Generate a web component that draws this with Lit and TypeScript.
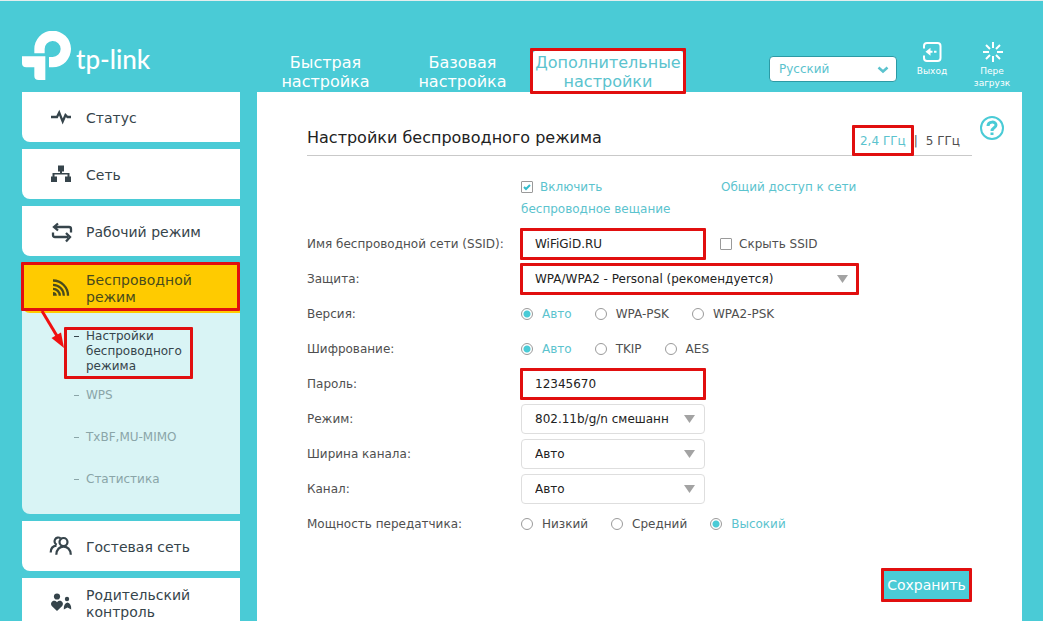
import { LitElement, html, css, svg, nothing } from "lit";
import { customElement, property, state } from "lit/decorators.js";
import { classMap } from "lit/directives/class-map.js";

const icons = {
  status: svg`<path d="M0 9H6L8.200 4.500L11.700 13.500L14.500 7L16.500 9H20" fill="none" stroke="currentColor" stroke-width="2.300"/>`,
  network: svg`<path d="M7 .5h6v6h-2v1.500h7.500v3.500h1.500v5.500h-6v-5.500h2.500v-2h-13v2h2.500v5.500h-6v-5.500h1.500v-3.500h7.500v-1.500h-2z" fill="currentColor"/>`,
  mode: svg`<path d="M2 10.500V13Q2 15 4 15H17M4 5H18Q20 5 20 7V10.500M7 1.500L3 5L7 8.500M15 11L19 15L15 19.500" fill="none" stroke="currentColor" stroke-width="2.300"/>`,
  wireless: svg`<g fill="none" stroke="currentColor" stroke-width="2.300"><path d="M2 1.500A15 15 0 0 1 17 16.700M2 5.800A10.800 10.800 0 0 1 12.800 16.700M2 9.900A6.800 6.800 0 0 1 8.800 16.700"/></g><path d="M2 12.900a3.800 3.800 0 0 1 3.800 3.800H2z" fill="currentColor"/>`,
  guest: svg`<g fill="none" stroke="currentColor" stroke-width="2.200"><circle cx="12.500" cy="5" r="4"/><path d="M9.500 1.200A3.800 3.800 0 1 0 5.800 7.800M-.3 15.500C-.3 11.500 1.500 9 5.500 8.600M5.300 17.800C5.300 6.800 19.800 6.800 19.800 17.800"/></g>`,
  parental: svg`<g fill="currentColor"><circle cx="6" cy="2.500" r="3.100"/><path d="M6 17L.8 12C-1.800 8.500 3 4.500 6 8.300C9 4.500 13.800 8.500 11.200 12z"/><circle cx="16" cy="5" r="2.200"/><path d="M12.800 15.500C12.500 11.500 14 9 16.500 8.500C19 9 20.500 11.500 20.200 15.500L16.500 13.500z"/></g>`,
};

type IconName = keyof typeof icons;

interface Section {
  icon: IconName;
  label: string;
  pages?: string[];
}

const SECTIONS: Section[] = [
  { icon: "status", label: "Статус" },
  { icon: "network", label: "Сеть" },
  { icon: "mode", label: "Рабочий режим" },
  {
    icon: "wireless",
    label: "Беспроводной режим",
    pages: ["Настройки беспроводного режима", "WPS", "TxBF,MU-MIMO", "Статистика"],
  },
  { icon: "guest", label: "Гостевая сеть" },
  { icon: "parental", label: "Родительский контроль" },
];

const shared = css`
  :host {
    display: block;
    font-family: "DejaVu Sans", Verdana, Tahoma, sans-serif;
    font-size: 12px;
  }
  *,
  *::before,
  *::after {
    box-sizing: border-box;
  }
  a {
    color: inherit;
    text-decoration: none;
  }
  button,
  input,
  select {
    margin: 0;
    font: inherit;
    color: inherit;
  }
  .mark {
    position: relative;
  }
  .mark::after {
    content: "";
    position: absolute;
    inset: var(--mark-inset, -2px);
    border: 3px solid #e10f0f;
    border-radius: 1px;
    pointer-events: none;
    z-index: 2;
  }
`;

@customElement("router-header")
class RouterHeader extends LitElement {
  static styles = [
    shared,
    css`
      .bar {
        display: grid;
        grid-template-columns: 218px 1fr;
        column-gap: 17px;
        height: 92px;
        padding: 0 21px 0 22px;
        color: #fff;
      }
      .logo {
        display: flex;
        padding-top: 31px;
      }
      .logo svg {
        width: 50px;
        height: 49px;
      }
      .word {
        margin: 9px 0 0 4px;
        font: 500 26px/38px Lato, sans-serif;
      }
      .right {
        display: flex;
        justify-content: space-between;
      }
      .tabs {
        display: flex;
        align-items: flex-end;
        font-size: 16px;
        line-height: 19px;
        text-align: center;
      }
      .tab {
        width: 137px;
        height: 42px;
        padding-top: 3px;
      }
      .tab.current {
        width: 152px;
        margin-left: 1px;
        background: #fff;
        color: #5bc3ce;
        border-radius: 6px 6px 0 0;
      }
      .tools {
        display: flex;
        align-items: flex-start;
      }
      .language {
        position: relative;
        margin-top: 56px;
        color: #5bc3ce;
      }
      .language select {
        display: block;
        width: 128px;
        height: 26px;
        padding: 0 24px 1px 9px;
        appearance: none;
        background: #fff;
        border: 1px solid #2c9aa5;
        border-radius: 4px;
      }
      .language svg {
        position: absolute;
        right: 8px;
        top: 10px;
        width: 12px;
        height: 8px;
        pointer-events: none;
      }
      .tool {
        width: 60px;
        margin-top: 41px;
        padding: 0;
        border: 0;
        background: none;
        font-size: 9px;
        line-height: 12px;
        text-align: center;
      }
      .tool svg {
        display: block;
        width: 22px;
        height: 22px;
        margin: 0 auto 2px;
      }
      .logout {
        margin-left: 5px;
      }
    `,
  ];

  render() {
    return html`
      <header class="bar">
        <a class="logo" href="#" aria-label="tp-link">
          <svg viewBox="66 93 150 147" fill="#fff" aria-hidden="true">
            <path d="M103 160V149A55 55 0 1 1 158 202H147V171H158A24 24 0 1 0 134 148V160Z" />
            <path d="M66 169H136V240H116Q103 240 103 228V202H79Q66 202 66 190Z" />
          </svg>
          <span class="word">tp-link</span>
        </a>
        <div class="right">
          <nav class="tabs">
            <a class="tab" href="#quick">Быстрая<br />настройка</a>
            <a class="tab" href="#basic">Базовая<br />настройка</a>
            <a class="tab current mark" href="#advanced">Дополнительные<br />настройки</a>
          </nav>
          <div class="tools">
            <div class="language">
              <select aria-label="Язык">
                <option>Русский</option>
              </select>
              <svg viewBox="0 0 12 8" fill="none" stroke="currentColor" stroke-width="2.500" aria-hidden="true">
                <path d="M1.500 1.500L6 5.500L10.500 1.500" />
              </svg>
            </div>
            <button class="tool logout">
              <svg viewBox="0 0 22 22" fill="none" stroke="#fff" stroke-width="2" aria-hidden="true">
                <path d="M3 7.500V5Q3 2 6 2H16.500Q19.500 2 19.500 5V17Q19.500 20 16.500 20H6Q3 20 3 17V14.500" />
                <path d="M8 10.800H11.500M13 10.800H15.500" />
                <path d="M4.500 10.800L9.500 6.800V14.800Z" fill="#fff" stroke="none" />
              </svg>
              Выход
            </button>
            <button class="tool">
              <svg viewBox="0 0 22 22" stroke="#fff" stroke-width="2" aria-hidden="true">
                <path d="M12 1V7M12 15V21M2 11H8M16 11H22M5 4L9 8M15 14L19 18M19 4L15 8M9 14L5 18" />
              </svg>
              Пере<br />загрузк
            </button>
          </div>
        </div>
      </header>
    `;
  }
}

@customElement("router-menu")
class RouterMenu extends LitElement {
  static styles = [
    shared,
    css`
      .menu {
        display: flex;
        flex-direction: column;
        gap: 7px;
      }
      .section {
        background: #fff;
        border-bottom-left-radius: 8px;
      }
      .section.open {
        background: #d9f4f5;
      }
      .title {
        display: grid;
        grid-template-columns: 20px 1fr;
        align-items: center;
        column-gap: 15px;
        height: 50px;
        padding: 2px 20px 0 29px;
        color: #36444b;
        font-size: 14px;
        line-height: 17px;
        border-bottom-left-radius: 8px;
      }
      .open .title {
        --mark-inset: -1px 0 2px -1px;
        background: #ffcb00;
        color: #494b1c;
      }
      .title svg {
        width: 20px;
        height: 20px;
        overflow: visible;
      }
      .pages {
        margin: 0;
        padding: 16px 0 14px;
        list-style: none;
        color: #8aa5a8;
        line-height: 15px;
      }
      .page {
        display: grid;
        grid-template-columns: 12px 1fr;
        align-items: center;
        min-height: 42px;
        margin: 0 48px 0 42px;
        padding-left: 10px;
      }
      .page.current {
        --mark-inset: -2px -1px -5px 0;
        color: #36444b;
      }
      .dash {
        align-self: stretch;
        display: flex;
        align-items: center;
      }
      .dash::before {
        content: "";
        width: 5px;
        height: 1px;
        background: currentColor;
      }
      .current .dash {
        height: 15px;
      }
      .arrow {
        position: absolute;
        left: -25px;
        top: -19px;
        width: 28px;
        height: 40px;
        z-index: 3;
      }
    `,
  ];

  render() {
    return html`
      <nav class="menu">
        ${SECTIONS.map(
          (s) => html`
            <div class=${classMap({ section: true, open: !!s.pages })}>
              <a class=${classMap({ title: true, mark: !!s.pages })} href="#">
                <svg viewBox="0 0 20 20" aria-hidden="true">${icons[s.icon]}</svg>
                <span>${s.label}</span>
              </a>
              ${s.pages ? this.renderPages(s.pages) : nothing}
            </div>
          `
        )}
      </nav>
    `;
  }

  private renderPages(pages: string[]) {
    return html`
      <ul class="pages">
        ${pages.map(
          (p, i) => html`
            <li class=${classMap({ page: true, current: i === 0, mark: i === 0 })}>
              <span class="dash"></span><a href="#">${p}</a>
              ${i === 0
                ? html`<svg class="arrow" viewBox="0 0 28 40" aria-hidden="true">
                    <path d="M3 1L18 26" stroke="#f01010" stroke-width="3" />
                    <path d="M25 38L12.500 28L22 22.500Z" fill="#f01010" />
                  </svg>`
                : nothing}
            </li>
          `
        )}
      </ul>
    `;
  }
}

@customElement("wireless-settings")
class WirelessSettings extends LitElement {
  @property() band = "2,4 ГГц";
  @state() private version = "Авто";
  @state() private cipher = "Авто";
  @state() private power = "Высокий";

  static styles = [
    shared,
    css`
      :host {
        color: #4f4f4f;
      }
      .head {
        display: flex;
        align-items: flex-end;
        justify-content: space-between;
        height: 64px;
        border-bottom: 1px solid #c9c9c9;
      }
      h1 {
        margin: 0 0 7px;
        color: #222;
        font-size: 16px;
        font-weight: 400;
        line-height: 20px;
      }
      .bands {
        display: flex;
        margin: 0 12px 4px 0;
        line-height: 20px;
      }
      .bands a {
        --mark-inset: -6px -8px -5px;
      }
      .bands a.current,
      .lead,
      .choice.on {
        color: #5bc3ce;
      }
      .sep {
        margin: 0 8px;
      }
      .lead {
        display: grid;
        grid-template-columns: 184px 1fr;
        column-gap: 16px;
        margin: 20px 0 6px 214px;
        line-height: 22px;
      }
      .lead input {
        margin-right: 7px;
        vertical-align: -2px;
      }
      .row {
        display: grid;
        grid-template-columns: 214px 1fr;
        align-items: center;
        height: 35px;
      }
      .cell {
        display: flex;
        align-items: center;
      }
      .field {
        --mark-inset: -1px;
        position: relative;
        width: 184px;
        color: #222;
      }
      .field.wide {
        width: 337px;
      }
      .field input,
      .field select {
        display: block;
        width: 100%;
        height: 30px;
        padding: 0 30px 0 13px;
        appearance: none;
        background: #fff;
        border: 1px solid #dedede;
        border-radius: 4px;
        outline: 0;
      }
      .field svg {
        position: absolute;
        right: 10px;
        top: 11px;
        width: 11px;
        height: 8px;
        fill: #a3a3a3;
        pointer-events: none;
      }
      .choices {
        display: flex;
        gap: 23px;
      }
      .choice {
        display: flex;
        align-items: center;
        gap: 9px;
      }
      input[type="radio"],
      input[type="checkbox"] {
        appearance: none;
        flex: none;
        width: 12px;
        height: 12px;
        background: #fff;
        border: 1px solid #9a9a9a;
      }
      input[type="radio"] {
        border-radius: 50%;
      }
      input[type="radio"]:checked {
        background: radial-gradient(circle, #4acbd6 3px, #fff 4px);
      }
      input[type="checkbox"] {
        border-radius: 1px;
      }
      input[type="checkbox"]:checked {
        background: center / 10px 10px no-repeat
          url("data:image/svg+xml,%3Csvg xmlns='http://www.w3.org/2000/svg' viewBox='0 0 10 10'%3E%3Cpath d='M2 5L4 7L8 3' fill='none' stroke='%2334bccb' stroke-width='2'/%3E%3C/svg%3E");
      }
      .hide {
        margin-left: 15px;
        gap: 7px;
      }
      .foot {
        display: flex;
        justify-content: flex-end;
        margin-top: 28px;
      }
      .save {
        --mark-inset: -1px 0;
        width: 91px;
        height: 32px;
        padding: 0;
        border: 0;
        background: #4acbd6;
        color: #fff;
        font-size: 14px;
      }
    `,
  ];

  private radios(
    name: string,
    options: string[],
    value: string,
    pick: (v: string) => void
  ) {
    return html`<div class="choices" role="radiogroup">
      ${options.map(
        (o) => html`<label class=${classMap({ choice: true, on: o === value })}>
          <input type="radio" name=${name} .checked=${o === value} @change=${() => pick(o)} />${o}
        </label>`
      )}
    </div>`;
  }

  private select(id: string, value: string, cls = "") {
    return html`<div class="field ${cls}">
      <select id=${id}>
        <option>${value}</option>
      </select>
      <svg viewBox="0 0 11 8" aria-hidden="true"><path d="M0 0H11L5.500 8Z" /></svg>
    </div>`;
  }

  render() {
    return html`
      <div class="head">
        <h1>Настройки беспроводного режима</h1>
        <div class="bands">
          <a class="current mark" href="#24">${this.band}</a><span class="sep">|</span
          ><a href="#5">5 ГГц</a>
        </div>
      </div>
      <form @submit=${(e: Event) => e.preventDefault()}>
        <div class="lead">
          <label><input type="checkbox" checked />Включить<br />беспроводное вещание</label>
          <a href="#sharing">Общий доступ к сети</a>
        </div>
        <div class="row">
          <label for="ssid">Имя беспроводной сети (SSID):</label>
          <div class="cell">
            <div class="field mark"><input id="ssid" type="text" value="WiFiGiD.RU" /></div>
            <label class="choice hide"><input type="checkbox" />Скрыть SSID</label>
          </div>
        </div>
        <div class="row">
          <label for="security">Защита:</label>
          ${this.select("security", "WPA/WPA2 - Personal (рекомендуется)", "wide mark")}
        </div>
        <div class="row">
          <span>Версия:</span>
          ${this.radios("version", ["Авто", "WPA-PSK", "WPA2-PSK"], this.version, (v) => (this.version = v))}
        </div>
        <div class="row">
          <span>Шифрование:</span>
          ${this.radios("cipher", ["Авто", "TKIP", "AES"], this.cipher, (v) => (this.cipher = v))}
        </div>
        <div class="row">
          <label for="password">Пароль:</label>
          <div class="field mark"><input id="password" type="text" value="12345670" /></div>
        </div>
        <div class="row">
          <label for="mode">Режим:</label>
          ${this.select("mode", "802.11b/g/n смешанн")}
        </div>
        <div class="row">
          <label for="width">Ширина канала:</label>
          ${this.select("width", "Авто")}
        </div>
        <div class="row">
          <label for="channel">Канал:</label>
          ${this.select("channel", "Авто")}
        </div>
        <div class="row">
          <span>Мощность передатчика:</span>
          ${this.radios("power", ["Низкий", "Средний", "Высокий"], this.power, (v) => (this.power = v))}
        </div>
        <div class="foot"><button class="save mark">Сохранить</button></div>
      </form>
    `;
  }
}

@customElement("app-root")
class AppRoot extends LitElement {
  static styles = [
    shared,
    css`
      .page {
        height: 100vh;
        overflow: auto;
        scrollbar-width: none;
        background: #4acbd6;
        box-shadow: inset 0 1px #e4eeee;
      }
      .body {
        display: grid;
        grid-template-columns: 218px 1fr;
        column-gap: 17px;
        padding: 0 21px 0 22px;
      }
      .content {
        position: relative;
        padding: 0 50px 40px;
        background: #fff;
      }
      .help {
        position: absolute;
        right: 18px;
        top: 24px;
        width: 24px;
        height: 24px;
        padding: 0;
        border: 2px solid #4acbd6;
        border-radius: 50%;
        background: #fff;
        color: #4acbd6;
      }
      .help svg {
        display: block;
        width: 20px;
        height: 20px;
      }
    `,
  ];

  render() {
    return html`
      <div class="page">
        <router-header></router-header>
        <div class="body">
          <router-menu></router-menu>
          <main class="content">
            <button class="help" aria-label="Справка">
              <svg viewBox="0 0 20 20" fill="none" stroke="currentColor" stroke-width="3" aria-hidden="true">
                <path d="M6 8C6 3 14 3 14 7C14 10 10 9.500 10 13M10 14.500V17" />
              </svg>
            </button>
            <wireless-settings></wireless-settings>
          </main>
        </div>
      </div>
    `;
  }
}
